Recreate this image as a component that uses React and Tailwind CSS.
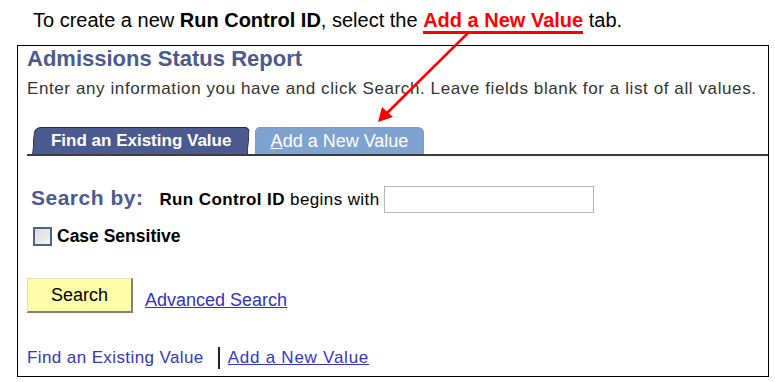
import React from "react";

function Tab({ active, children }) {
  if (active) {
    return (
      <div className="h-[27px] w-[216px] flex items-center justify-center bg-[#4b5a8f] border border-b-0 border-[#1f2a4f] rounded-tl-[7px] rounded-tr-[5px] text-white font-bold text-[17px] skew-x-[-4deg]">
        <span className="skew-x-[4deg]">{children}</span>
      </div>
    );
  }
  return (
    <div className="h-[27px] w-[169px] flex items-center justify-center bg-[#7fa3d0] border border-b-0 border-[#8d98a8] rounded-tl-[5px] rounded-tr-[6px] text-white text-[18px]">
      {children}
    </div>
  );
}

export default function App() {
  return (
    <div className="relative w-[775px] h-[382px] bg-white font-['Liberation_Sans',Arial,sans-serif] overflow-hidden">
      <p className="pl-[33px] pt-[9px] text-[20px] leading-[22px] text-black">
        To create a new <b>Run Control ID</b>, select the{" "}
        <span className="font-bold text-[#ff0000] border-b-[3px] border-[#ff0000]">
          Add a New Value
        </span>{" "}
        tab.
      </p>

      <div className="ml-[17px] mt-[14px] w-[752px] h-[332px] border border-black">
        <h1 className="pl-[9px] text-[22px] leading-[26px] font-bold text-[#4b5a8f]">
          Admissions Status Report
        </h1>
        <p className="pl-[9px] pt-[7px] text-[17px] leading-[20px] tracking-[0.6px] text-[#333]">
          Enter any information you have and click Search. Leave fields blank for a list of all values.
        </p>

        <div className="mt-[28px] ml-[9px] flex items-end gap-[6px] pl-[6px] border-b-2 border-[#3c3c3c]">
          <Tab active>Find an Existing Value</Tab>
          <Tab>
            <span>
              <span className="underline">A</span>dd a New Value
            </span>
          </Tab>
        </div>

        <div className="pl-[13px] pt-[30px] flex items-center">
          <span className="mb-[3px] text-[21px] leading-[24px] font-bold tracking-[0.5px] text-[#4b5a8f]">
            Search by:
          </span>
          <span className="ml-[16px] text-[17px] leading-[20px] tracking-[0.4px] text-black">
            <b>Run Control ID</b> begins with
          </span>
          <input
            type="text"
            className="ml-[4px] w-[210px] h-[27px] border border-[#b5b5b5] bg-white outline-none"
          />
        </div>

        <label className="pl-[15px] pt-[13px] flex items-center">
          <span className="w-[19px] h-[19px] border-2 border-[#4a6488] bg-gradient-to-br from-[#d9d9d9] to-[#f5f5f5]" />
          <span className="ml-[5px] text-[17.5px] leading-[20px] font-bold text-black">Case Sensitive</span>
        </label>

        <div className="pl-[9px] pt-[32px] flex items-center">
          <button className="w-[106px] h-[35px] bg-[#ffffaa] border-t border-l border-[#e0e0c0] border-r-2 border-b-2 border-r-[#808080] border-b-[#808080] text-[18px] leading-[20px] text-black">
            Search
          </button>
          <a className="ml-[12px] mt-[8px] text-[18px] leading-[20px] text-[#3131c8] underline cursor-pointer">
            Advanced Search
          </a>
        </div>

        <div className="pl-[9px] pt-[34px] flex items-center text-[17px] leading-[20px]">
          <a className="tracking-[0.4px] text-[#3535c8] cursor-pointer">Find an Existing Value</a>
          <span className="ml-[14px] mr-[8px] w-[2px] h-[22px] bg-[#222]" />
          <a className="tracking-[0.75px] text-[#3535c8] underline cursor-pointer">Add a New Value</a>
        </div>
      </div>

      <svg className="absolute left-0 top-0 pointer-events-none" width="775" height="382">
        <line x1="468" y1="33" x2="386" y2="114" stroke="#ff0000" strokeWidth="2.5" />
        <polygon points="378,122 382,107 393,117" fill="#ff0000" />
      </svg>
    </div>
  );
}
